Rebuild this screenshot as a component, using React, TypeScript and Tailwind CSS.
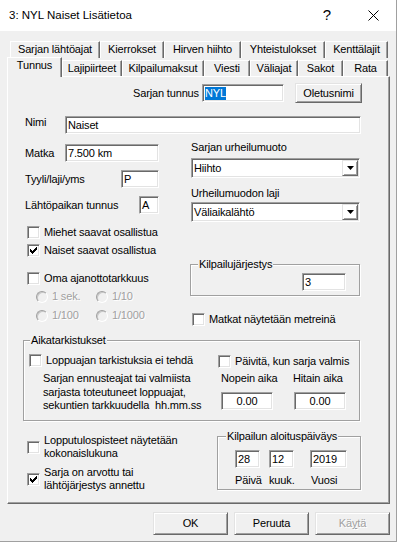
import type { ReactNode } from "react";

const sunken =
  "border border-t-[#a0a0a0] border-l-[#a0a0a0] border-r-white border-b-white shadow-[inset_1px_1px_0_#696969,inset_-1px_-1px_0_#e3e3e3]";
const raised =
  "border border-t-[#e3e3e3] border-l-[#e3e3e3] border-r-[#696969] border-b-[#696969] shadow-[inset_1px_1px_0_#fff,inset_-1px_-1px_0_#a0a0a0]";
const etched = "border border-[#a0a0a0] shadow-[inset_1px_1px_0_#fff,1px_1px_0_#fff]";
const disabledText = "text-[#a0a0a0] [text-shadow:1px_1px_0_#fff]";

function Edit({ className, children }: { className: string; children?: ReactNode }) {
  return (
    <div className={`${sunken} bg-white h-[18px] flex items-center px-[2px] leading-[13px] whitespace-nowrap ${className}`}>
      {children}
    </div>
  );
}

function Button({ className, children }: { className: string; children: ReactNode }) {
  return (
    <div className={`${raised} flex items-center justify-center bg-[#f0f0f0] ${className}`}>{children}</div>
  );
}

function CheckMark() {
  return (
    <svg width="7" height="7" viewBox="0 0 7 7" shapeRendering="crispEdges" className="absolute left-[2px] top-[2px]">
      <path
        d="M6 0h1v1h-1zM5 1h2v1h-2zM0 2h1v1h-1zM4 2h3v1h-3zM0 3h2v1h-2zM3 3h3v1h-3zM0 4h5v1h-5zM1 5h3v1h-3zM2 6h1v1h-1z"
        fill="#000"
      />
    </svg>
  );
}

function Check({ checked, className = "", children }: { checked?: boolean; className?: string; children: ReactNode }) {
  return (
    <div className={`flex items-center ${className}`}>
      <div className={`${sunken} relative bg-white w-[13px] h-[13px] shrink-0`}>{checked && <CheckMark />}</div>
      <div className="ml-[4px] leading-[13px]">{children}</div>
    </div>
  );
}

function Radio({ className = "", children }: { className?: string; children: ReactNode }) {
  return (
    <div className={`flex items-center ${className}`}>
      <div className="w-[12px] h-[12px] rounded-full border border-t-[#a0a0a0] border-l-[#a0a0a0] border-r-white border-b-white shadow-[inset_1px_1px_0_#c8c8c8] bg-[#f0f0f0] shrink-0" />
      <div className={`ml-[4px] leading-[13px] ${disabledText}`}>{children}</div>
    </div>
  );
}

function Combo({ value }: { value: string }) {
  return (
    <div className={`${sunken} bg-white h-[20px] w-[169px] flex items-stretch p-[1px]`}>
      <div className="flex-1 flex items-center pl-[1px] leading-[13px]">{value}</div>
      <div className={`${raised} w-[16px] flex items-center justify-center`}>
        <svg width="7" height="4" viewBox="0 0 7 4">
          <path d="M0 0h7l-3.5 4z" fill="#000" />
        </svg>
      </div>
    </div>
  );
}

function Group({ title, titleLeft, className, children }: { title: string; titleLeft: string; className: string; children: ReactNode }) {
  return (
    <div className={`relative ${etched} ${className}`}>
      <div className={`absolute -top-[7px] ${titleLeft} px-[1px] bg-[#f0f0f0] leading-[13px]`}>{title}</div>
      {children}
    </div>
  );
}

const backTabs: [string, string][] = [
  ["Sarjan lähtöajat", "w-[90px]"],
  ["Kierrokset", "w-[64px]"],
  ["Hirven hiihto", "w-[77px]"],
  ["Yhteistulokset", "w-[84px]"],
  ["Kenttälajit", "w-[63px]"],
];

const frontTabs: [string, string][] = [
  ["Lajipiirteet", "w-[60px]"],
  ["Kilpailumaksut", "w-[82px]"],
  ["Viesti", "w-[46px]"],
  ["Väliajat", "w-[48px]"],
  ["Sakot", "w-[45px]"],
  ["Rata", "w-[45px]"],
];

const tabCls =
  "flex items-center justify-center border-t border-l border-t-white border-l-white border-r border-r-[#696969] shadow-[inset_-1px_0_0_#a0a0a0] whitespace-nowrap";

export default function App() {
  return (
    <div className="w-[397px] h-[542px] bg-[#f0f0f0] border-r border-b border-[#a0a0a0] font-['Liberation_Sans',Arial,sans-serif] text-[11px] tracking-[-0.15px] text-black overflow-hidden">
      {/* title bar */}
      <div className="h-[31px] bg-white flex items-center">
        <div className="pl-[9px] text-[11.5px] tracking-normal">3: NYL Naiset Lisätietoa</div>
        <div className="ml-auto flex h-full">
          <div className="w-[46px] flex items-center justify-center text-[15px] tracking-normal">?</div>
          <div className="w-[46px] flex items-center justify-center">
            <svg width="11" height="11" viewBox="0 0 11 11">
              <path d="M0.5 0.5L10.5 10.5M10.5 0.5L0.5 10.5" stroke="#000" strokeWidth="1" />
            </svg>
          </div>
        </div>
      </div>

      {/* tabs */}
      <div className="mt-[10px] ml-[10px] flex h-[17px]">
        {backTabs.map(([t, w]) => (
          <div key={t} className={`${tabCls} ${w} pb-[1px]`}>
            {t}
          </div>
        ))}
      </div>
      <div className="ml-[7px] flex h-[18px] items-end">
        <div className="relative z-10 -mb-px h-[20px] w-[55px] bg-[#f0f0f0] flex items-center justify-center pb-[4px] border-t border-l border-t-white border-l-white border-r border-r-[#696969] shadow-[inset_-1px_0_0_#a0a0a0]">
          Tunnus
        </div>
        {frontTabs.map(([t, w]) => (
          <div key={t} className={`${tabCls} ${w} h-[16px]`}>
            {t}
          </div>
        ))}
      </div>

      {/* panel */}
      <div className="ml-[7px] w-[383px] h-[428px] border-t border-l border-t-white border-l-white border-r border-b border-r-[#696969] border-b-[#696969] shadow-[inset_-1px_-1px_0_#a0a0a0]">
        <div className="mt-[6px] h-[20px] flex items-center pl-[125px]">
          <div className="w-[69px]">Sarjan tunnus</div>
          <Edit className="w-[82px]">
            <span className="bg-[#0078d7] text-white">NYL</span>
          </Edit>
          <Button className="ml-[11px] w-[67px] h-[20px]">Oletusnimi</Button>
        </div>

        <div className="mt-[13px] flex pl-[17px]">
          <div className="w-[40px] leading-[13px]">Nimi</div>
          <Edit className="w-[296px]">Naiset</Edit>
        </div>

        <div className="flex pl-[17px]">
          <div className="w-[166px] flex flex-col">
            <div className="mt-[10px] flex items-center">
              <div className="w-[40px]">Matka</div>
              <Edit className="w-[94px]">7.500 km</Edit>
            </div>
            <div className="mt-[8px] flex items-center">
              <div className="w-[96px]">Tyyli/laji/yms</div>
              <Edit className="w-[38px]">P</Edit>
            </div>
            <div className="mt-[8px] flex items-center">
              <div className="w-[114px]">Lähtöpaikan tunnus</div>
              <Edit className="w-[20px]">A</Edit>
            </div>
            <Check className="mt-[12px] ml-[2px]">Miehet saavat osallistua</Check>
            <Check checked className="mt-[5px] ml-[2px]">
              Naiset saavat osallistua
            </Check>
            <Check className="mt-[15px] ml-[2px]">Oma ajanottotarkkuus</Check>
            <div className="mt-[5px] ml-[11px] flex">
              <Radio className="w-[60px]">1 sek.</Radio>
              <Radio>1/10</Radio>
            </div>
            <div className="mt-[6px] ml-[11px] flex">
              <Radio className="w-[60px]">1/100</Radio>
              <Radio>1/1000</Radio>
            </div>
          </div>

          <div className="w-[170px] flex flex-col">
            <div className="mt-[7px] leading-[13px]">Sarjan urheilumuoto</div>
            <div className="mt-[4px]">
              <Combo value="Hiihto" />
            </div>
            <div className="mt-[9px] leading-[13px]">Urheilumuodon laji</div>
            <div className="mt-[2px]">
              <Combo value="Väliaikalähtö" />
            </div>
            <Group title="Kilpailujärjestys" titleLeft="left-[7px]" className="mt-[42px] -ml-px w-[170px] h-[32px]">
              <div className="flex justify-end pr-[13px] pt-[8px]">
                <Edit className="w-[44px]">3</Edit>
              </div>
            </Group>
            <Check className="mt-[17px] ml-px">Matkat näytetään metreinä</Check>
          </div>
        </div>

        <Group title="Aikatarkistukset" titleLeft="left-[6px]" className="mt-[14px] ml-[15px] w-[337px] h-[81px]">
          <div className="flex items-start pt-[13px] pl-[5px]">
            <Check className="w-[189px]">Loppuajan tarkistuksia ei tehdä</Check>
            <Check className="mt-px">Päivitä, kun sarja valmis</Check>
          </div>
          <div className="flex mt-[4px] pl-[19px]">
            <div className="w-[178px] leading-[13.5px]">
              Sarjan ennusteajat tai valmiista
              <br />
              sarjasta toteutuneet loppuajat,
              <br />
              sekuntien tarkkuudella&nbsp; hh.mm.ss
            </div>
            <div className="w-[73px] flex flex-col">
              <div className="leading-[13px]">Nopein aika</div>
              <Edit className="mt-[7px] w-[52px] justify-center">0.00</Edit>
            </div>
            <div className="flex flex-col">
              <div className="leading-[13px] -ml-px">Hitain aika</div>
              <Edit className="mt-[7px] w-[52px] justify-center">0.00</Edit>
            </div>
          </div>
        </Group>

        <div className="flex">
          <div className="ml-[19px] w-[190px] flex flex-col">
            <Check className="mt-[13px]">
              Lopputulospisteet näytetään
              <br />
              kokonaislukuna
            </Check>
            <Check checked className="mt-[6px]">
              Sarja on arvottu tai
              <br />
              lähtöjärjestys annettu
            </Check>
          </div>
          <Group title="Kilpailun aloituspäiväys" titleLeft="left-[8px]" className="mt-[15px] w-[144px] h-[54px]">
            <div className="flex pt-[13px] pl-[17px]">
              <div className="w-[34px] flex flex-col">
                <Edit className="w-[25px]">28</Edit>
                <div className="mt-[6px] leading-[13px]">Päivä</div>
              </div>
              <div className="w-[41px] flex flex-col">
                <Edit className="w-[25px]">12</Edit>
                <div className="mt-[6px] leading-[13px]">kuuk.</div>
              </div>
              <div className="flex flex-col">
                <Edit className="w-[37px]">2019</Edit>
                <div className="mt-[6px] ml-px leading-[13px]">Vuosi</div>
              </div>
            </div>
          </Group>
        </div>
      </div>

      {/* buttons */}
      <div className="mt-[8px] pl-[153px] flex gap-[6px]">
        <Button className="w-[75px] h-[23px]">OK</Button>
        <Button className="w-[75px] h-[23px]">Peruuta</Button>
        <Button className="w-[75px] h-[23px]">
          <span className={disabledText}>
            Kä<span className="underline">y</span>tä
          </span>
        </Button>
      </div>
    </div>
  );
}
